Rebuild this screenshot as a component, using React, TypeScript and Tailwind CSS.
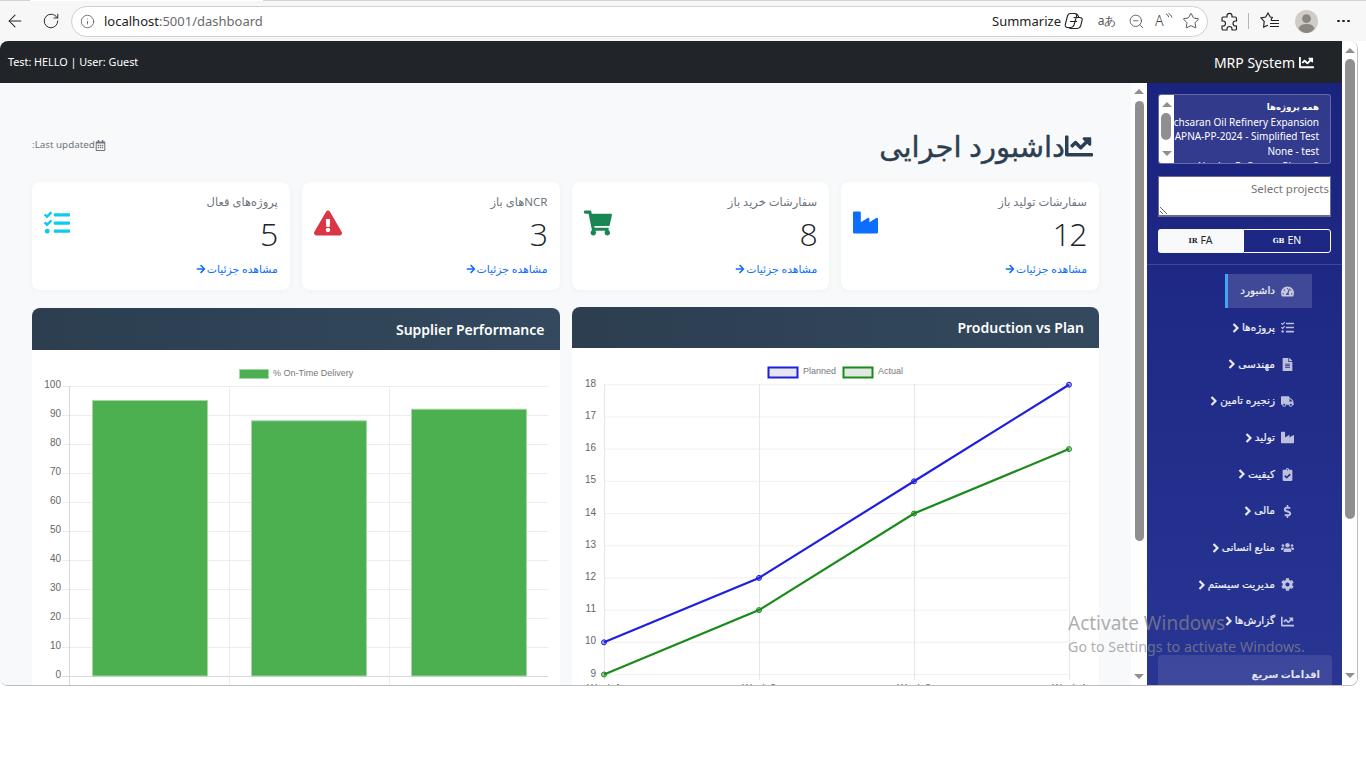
import React from 'react';
import { ArrowLeft, RotateCw, Info, ZoomOut, Star } from 'lucide-react';
import {
    FaChartLine, FaRegCalendarAlt, FaTasks, FaExclamationTriangle, FaShoppingCart, FaIndustry, FaArrowRight,
    FaTachometerAlt, FaFileAlt, FaTruck, FaClipboardCheck, FaDollarSign, FaUsers, FaCog,
} from 'react-icons/fa';

const uiFont = "font-['Noto_Sans','DejaVu_Sans',sans-serif]";

const stats = [
    { title: 'سفارشات تولید باز', value: '12', icon: <FaIndustry className="w-[25px] h-[25px] text-[#0d6efd]" /> },
    { title: 'سفارشات خرید باز', value: '8', icon: <FaShoppingCart className="w-[28px] h-[26px] text-[#198754]" /> },
    { title: 'NCRهای باز', value: '3', icon: <FaExclamationTriangle className="w-[28px] h-[26px] text-[#dc3545]" /> },
    { title: 'پروژه‌های فعال', value: '5', icon: <FaTasks className="w-[26px] h-[26px] text-[#0dcaf0]" /> },
];

const navItems = [
    { label: 'داشبورد', icon: <FaTachometerAlt />, active: true },
    { label: 'پروژه‌ها', icon: <FaTasks />, sub: true },
    { label: 'مهندسی', icon: <FaFileAlt />, sub: true },
    { label: 'زنجیره تامین', icon: <FaTruck />, sub: true },
    { label: 'تولید', icon: <FaIndustry />, sub: true },
    { label: 'کیفیت', icon: <FaClipboardCheck />, sub: true },
    { label: 'مالی', icon: <FaDollarSign />, sub: true },
    { label: 'منابع انسانی', icon: <FaUsers />, sub: true },
    { label: 'مدیریت سیستم', icon: <FaCog />, sub: true },
    { label: 'گزارش‌ها', icon: <FaChartLine />, sub: true },
];

const ScrollBar: React.FC<{ thumbTop: number; thumbHeight: number; className: string; thumbClass: string }> = ({ thumbTop, thumbHeight, className, thumbClass }) => (
    <div className={`relative flex flex-col items-center justify-between shrink-0 ${className}`}>
        <div className="w-0 h-0 border-x-[5px] border-x-transparent border-b-[5px] border-b-[#8f8f8f]" />
        <div className={`absolute rounded-full bg-[#8f8f8f] ${thumbClass}`} style={{ top: thumbTop, height: thumbHeight }} />
        <div className="w-0 h-0 border-x-[5px] border-x-transparent border-t-[5px] border-t-[#8f8f8f]" />
    </div>
);

const CopilotIcon = () => (
    <svg width="20" height="18" viewBox="0 0 20 18" fill="none" stroke="#222" strokeWidth="1.1">
        <path d="M6.500 1.500h4c1.800 0 2.500 1.200 2 2.800L10 13c-.5 1.600-1.600 2.500-3 2.500H3.500c-1.700 0-2.600-1.400-2.200-3L3.500 4c.4-1.500 1.500-2.500 3-2.500z" />
        <path d="M9.500 5.500h6.200c1.900 0 2.900 1.400 2.400 3l-1.500 5.500c-.5 1.500-1.600 2.500-3 2.500H7.500c-1.300 0-2.300-.4-3-1.200" />
        <path d="M11.500 1.800c1.700.2 2.700 1.500 3.400 3.700M6 9.500h7" />
    </svg>
);

const PuzzleIcon = () => (
    <svg width="19" height="19" viewBox="0 0 19 19" fill="none" stroke="#222" strokeWidth="1.150" className="shrink-0">
        <path d="M7 3.800a2.500 2.500 0 0 1 5 0V5h3.200c.7 0 1.300.6 1.300 1.300V9h-1a2.500 2.500 0 0 0 0 5h1v2.700c0 .7-.6 1.300-1.300 1.300H12v-1a2.500 2.500 0 0 0-5 0v1H3.300c-.7 0-1.300-.6-1.300-1.300V14h1a2.500 2.500 0 0 0 0-5H2V6.300C2 5.600 2.600 5 3.300 5H7z" />
    </svg>
);

const FavoritesIcon = () => (
    <svg width="21" height="18" viewBox="0 0 21 18" fill="none" stroke="#222" strokeWidth="1.150" className="shrink-0">
        <path d="M13 5.500 10.300 5 8 1 5.700 5 1 6l3.200 3.400L3.600 15 8 13.300" />
        <path d="M11 8.500h3M10 11.500h9M10 14.500h9M12 5.800l-1 2.700M14 8.500h5" />
    </svg>
);

const NavChevron = () => (
    <svg width="7" height="10" viewBox="0 0 7 10" fill="none" stroke="currentColor" strokeWidth="2.200" className="shrink-0 -mr-[2px]">
        <path d="M1.500 1 5.500 5 1.500 9" />
    </svg>
);

const BrowserBar = () => (
    <div className="h-[41px] shrink-0 bg-[#f7f7f7] flex flex-col text-[#222]">
        <div className="h-px flex shrink-0">
            <div className="w-[30px] bg-[#d4d4d4]" />
            <div className="w-[233px] bg-white" />
            <div className="flex-1 bg-[#d4d4d4]" />
        </div>
        <div className="flex-1 flex items-center">
            <div className="w-[71px] flex items-center shrink-0">
                <ArrowLeft className="w-[20px] h-[20px] ml-[5px]" strokeWidth={1.25} />
                <RotateCw className="w-[18px] h-[18px] ml-[17px]" strokeWidth={1.25} />
            </div>
            <div className="w-[1137px] h-[31px] shrink-0 bg-white rounded-full border border-[#d0d0d0] flex items-center pl-[8px]">
                <Info className="w-[15px] h-[15px] text-[#555]" strokeWidth={1.25} />
                <span className="ml-[9px] pt-px text-[13px] text-[#6a6a6a]"><span className="text-[#222]">localhost</span>:5001/dashboard</span>
                <span className="ml-auto pt-px text-[13px] text-[#222]">Summarize</span>
                <span className="ml-[3px]"><CopilotIcon /></span>
                <span className="w-[32px] ml-[7px] text-center text-[#555] text-[12px] leading-none">aあ</span>
                <ZoomOut className="w-[17px] h-[17px] ml-[5px] text-[#444]" strokeWidth={1.1} />
                <span className="relative w-[18px] ml-[10px] text-[14px] font-light text-[#444] leading-none">
                    A
                    <svg className="absolute left-[10px] top-[-1px]" width="8" height="8" viewBox="0 0 8 8" fill="none" stroke="#444" strokeWidth="0.9">
                        <path d="M1 1c1.500.6 2.300 1.500 2.600 3M3.500.5c1.800.8 3 2.200 3.300 4" />
                    </svg>
                </span>
                <Star className="w-[18px] h-[18px] ml-[9px] mr-[7px] text-[#333]" strokeWidth={1.1} />
            </div>
            <span className="ml-[12px]"><PuzzleIcon /></span>
            <div className="w-px h-[16px] bg-[#b5b5b5] ml-[9px]" />
            <span className="ml-[11px]"><FavoritesIcon /></span>
            <svg className="ml-[14px] shrink-0" width="23" height="23" viewBox="0 0 23 23">
                <circle cx="11.500" cy="11.500" r="11.500" fill="#cfccc8" />
                <circle cx="11.500" cy="8.700" r="4.400" fill="#8a8782" />
                <path d="M3.500 18.500c1-3.200 4-4.500 8-4.500s7 1.300 8 4.500c-2 2.800-4.700 4.500-8 4.500s-6-1.700-8-4.500z" fill="#8a8782" />
            </svg>
            <div className="ml-[19px] flex gap-[2.500px]">
                <div className="w-[2.500px] h-[2.500px] rounded-full bg-[#222]" />
                <div className="w-[2.500px] h-[2.500px] rounded-full bg-[#222]" />
                <div className="w-[2.500px] h-[2.500px] rounded-full bg-[#222]" />
            </div>
        </div>
    </div>
);

const StatCard: React.FC<{ title: string; value: string; icon: React.ReactNode }> = ({ title, value, icon }) => (
    <div className="h-[108px] bg-white rounded-lg shadow-[0_1px_6px_rgba(0,0,0,0.04)] px-[12px] pt-[11px]">
        <div className="flex justify-between h-[67px]">
            <div>
                <div className="text-[11.500px] leading-[18px] text-[#6c757d]">{title}</div>
                <div className="mt-[5px] mr-[1px] text-[32px] leading-[36px] font-light tracking-[-1.500px] font-['Open_Sans',sans-serif] text-[#212529]">{value}</div>
            </div>
            <div className="pt-[17px]">{icon}</div>
        </div>
        <div className="mt-[1px] flex items-center gap-[1px] text-[10.800px] leading-[16px] text-[#0d6efd]">
            <span>مشاهده جزئیات</span>
            <FaArrowRight className="w-[10px] h-[10px]" />
        </div>
    </div>
);

const ChartCard: React.FC<{ title: string; className: string; headerClass: string; children: React.ReactNode }> = ({ title, className, headerClass, children }) => (
    <div className={`flex-1 min-w-0 flex flex-col ${className}`}>
        <div className={`shrink-0 rounded-t-lg bg-gradient-to-r from-[#2c3e50] to-[#34495e] flex items-center justify-start px-[15px] text-[14px] font-semibold text-white ${headerClass}`}>
            {title}
        </div>
        <div className="flex-1 bg-white">{children}</div>
    </div>
);

const BarChart = () => {
    const yTicks = [0, 10, 20, 30, 40, 50, 60, 70, 80, 90, 100];
    const y = (v: number) => 676 - v * 2.9;
    const bars = [{ x: 92, v: 95 }, { x: 251, v: 88 }, { x: 411, v: 92 }];
    return (
        <svg width="528" height="336" viewBox="32 350 528 336" className="block [direction:ltr] font-['Liberation_Sans',sans-serif]">
            <rect x="239.500" y="369.500" width="29" height="9" fill="#4caf50" stroke="#a5d6a7" />
            <text x="273" y="375.500" fontSize="9" fill="#777">% On-Time Delivery</text>
            {yTicks.map(t => (
                <g key={t}>
                    <line x1="62" x2="548" y1={y(t) + 0.5} y2={y(t) + 0.5} stroke={t === 0 ? '#d9d9d9' : '#ececec'} />
                    <text x="61" y={y(t) + 2} fontSize="10" fill="#666" textAnchor="end">{t}</text>
                </g>
            ))}
            {[69, 229, 389].map((x, i) => (
                <line key={x} x1={x + 0.5} x2={x + 0.5} y1="386" y2="686" stroke={i === 0 ? '#d9d9d9' : '#ececec'} />
            ))}
            {bars.map(b => (
                <rect key={b.x} x={b.x + 0.5} y={y(b.v)} width="115" height={676 - y(b.v)} fill="#4caf50" stroke="#a5d6a7" />
            ))}
        </svg>
    );
};

const LineChart = () => {
    const xs = [604, 759, 914, 1069];
    const y = (v: number) => 674.500 - (v - 9) * 32.2;
    const series = [
        { color: '#1f1fe0', data: [10, 12, 15, 18] },
        { color: '#1a8a1a', data: [9, 11, 14, 16] },
    ];
    return (
        <svg width="527" height="338" viewBox="572 348 527 338" className="block [direction:ltr] font-['Liberation_Sans',sans-serif]">
            <rect x="768.500" y="367.500" width="29" height="10" fill="#e6e6f0" stroke="#1f1fe0" strokeWidth="2" />
            <text x="803" y="373.500" fontSize="9" fill="#777">Planned</text>
            <rect x="843.500" y="367.500" width="29" height="10" fill="#e2e8e2" stroke="#1a8a1a" strokeWidth="2" />
            <text x="878" y="373.500" fontSize="9" fill="#777">Actual</text>
            {[9, 10, 11, 12, 13, 14, 15, 16, 17, 18].map(t => (
                <g key={t}>
                    <line x1="604" x2="1069" y1={y(t)} y2={y(t)} stroke="#f0f0f0" />
                    <text x="596" y={y(t) + 2} fontSize="10" fill="#666" textAnchor="end">{t}</text>
                </g>
            ))}
            {xs.map((x, i) => (
                <g key={x}>
                    <line x1={x + 0.5} x2={x + 0.5} y1="384" y2="680" stroke="#e6e6e6" />
                    <text x={x} y="692" fontSize="10" fill="#666" textAnchor="middle">Week {i + 1}</text>
                </g>
            ))}
            {series.map(s => (
                <g key={s.color}>
                    <polyline fill="none" stroke={s.color} strokeWidth="2.200" points={s.data.map((v, i) => `${xs[i]},${y(v)}`).join(' ')} />
                    {s.data.map((v, i) => (
                        <circle key={i} cx={xs[i]} cy={y(v)} r="2.500" fill={s.color} fillOpacity="0.4" stroke={s.color} />
                    ))}
                </g>
            ))}
        </svg>
    );
};

const Sidebar = () => (
    <aside dir="rtl" className="w-[196px] shrink-0 overflow-hidden bg-gradient-to-b from-[#1a237e] to-[#283593] text-white">
        <div className="pr-[12px] pl-[11px] pt-[11px]">
            <div className="h-[70px] flex bg-white/10 border border-white/25 rounded-[3px] overflow-hidden">
                <div className="flex-1 min-w-0 overflow-hidden whitespace-nowrap px-[11px] pt-[5px] text-[10px] leading-[14.700px]">
                    <div className="font-bold text-[8.600px]">همه پروژه‌ها</div>
                    <div>Gachsaran Oil Refinery Expansion</div>
                    <div>APNA-PP-2024 - Simplified Test</div>
                    <div>None - test</div>
                    <div>Abadan Refinery - Phase 2</div>
                </div>
                <ScrollBar thumbTop={18} thumbHeight={27} className="w-[15px] bg-white py-[7px]" thumbClass="w-[10px] left-[2px]" />
            </div>
            <textarea
                readOnly
                placeholder="Select projects"
                className="block w-full h-[41px] mt-[12px] bg-white border border-b-2 border-[#6b6f8f] pr-[1px] pt-[4px] text-[11.500px] leading-[16px] placeholder:text-[#757575]"
            />
            <div dir="ltr" className="flex h-[24px] mt-[12px] text-[10.500px]">
                <div className="w-[85px] bg-[#f8f9fa] rounded-l-[3px] flex items-center justify-center gap-[3px] text-[#212529]">
                    <span className="text-[7px] font-bold font-['DejaVu_Serif',serif]">IR</span><span>FA</span>
                </div>
                <div className="flex-1 border border-white rounded-r-[3px] flex items-center justify-center gap-[3px]">
                    <span className="text-[7px] font-bold font-['DejaVu_Serif',serif]">GB</span><span>EN</span>
                </div>
            </div>
        </div>
        <div className="h-px bg-white/15 mt-[11px] mb-[9px]" />
        <nav>
            {navItems.map(item => (
                <div
                    key={item.label}
                    className={`h-[34px] mb-[2.700px] mr-[31px] pr-[18px] flex items-center gap-[5px] text-[10.500px] [-webkit-text-stroke:0.2px] text-white/90 ${item.active ? 'w-[87px] bg-white/15 border-l-[3px] border-[#42a5f5] text-white' : ''}`}
                >
                    <span className="w-[14px] flex justify-center text-[13px] text-white/70 shrink-0">{item.icon}</span>
                    <span className="whitespace-nowrap">{item.label}</span>
                    {item.sub && <NavChevron />}
                </div>
            ))}
        </nav>
        <div className="mx-[11px] mt-[17px] h-[60px] bg-white/10 rounded-[4px] px-[12px] pt-[12px] text-[10px] font-bold text-white/85">اقدامات سریع</div>
    </aside>
);

const App: React.FC = () => (
    <div className={`relative w-[1366px] h-[768px] overflow-hidden bg-white flex flex-col ${uiFont}`}>
        <BrowserBar />
        <div className="h-[645px] w-[1358px] flex overflow-hidden rounded-b-lg rounded-tr-lg rounded-tl-lg border-b border-r border-[#bdbdbd]">
            <div className="flex-1 min-w-0 flex flex-col">
                <header className="h-[42px] shrink-0 bg-[#212529] text-white flex items-center justify-between pl-[8px] pr-[28px]">
                    <span className="text-[10.800px]">Test: HELLO | User: Guest</span>
                    <span className="flex items-center gap-[4px] text-[14px]">MRP System <FaChartLine className="w-[15px] h-[15px]" /></span>
                </header>
                <div className="flex-1 min-h-0 flex">
                    <main className="w-[1131px] shrink-0 overflow-hidden bg-[#f8f9fa] px-[32px] pt-[41px]">
                        <div dir="rtl" className="flex items-center justify-between h-[44px]">
                            <h1 className="flex items-center text-[29px] [-webkit-text-stroke:0.4px] text-[#2c3e50] pr-[6px] whitespace-nowrap">
                                <FaChartLine className="w-[28px] h-[28px] shrink-0" />
                                <span>داشبورد اجرایی</span>
                            </h1>
                            <div className="flex items-center text-[9.800px] text-[#6c757d] mt-[-2px]">
                                <FaRegCalendarAlt className="w-[11px] h-[11px]" />
                                <span>Last updated:</span>
                            </div>
                        </div>
                        <div dir="rtl" className="grid grid-cols-4 gap-[12px] mt-[14px]">
                            {stats.map(s => <StatCard key={s.title} {...s} />)}
                        </div>
                        <div dir="rtl" className="flex gap-[12px] mt-[18px] h-[400px]">
                            <ChartCard title="Production vs Plan" className="-mt-px" headerClass="h-[41px]"><LineChart /></ChartCard>
                            <ChartCard title="Supplier Performance" className="" headerClass="h-[42px]"><BarChart /></ChartCard>
                        </div>
                    </main>
                    <ScrollBar thumbTop={18} thumbHeight={440} className="w-[16px] bg-white py-[6px]" thumbClass="w-[9px] left-[4px]" />
                    <Sidebar />
                </div>
            </div>
            <ScrollBar thumbTop={18} thumbHeight={460} className="w-[15px] bg-white py-[7px]" thumbClass="w-[10px] left-[3px]" />
        </div>
        <div className="absolute left-[1068px] top-[610px] pointer-events-none whitespace-nowrap text-[#8a8a8a]/70">
            <div className="text-[19px] leading-[27px]">Activate Windows</div>
            <div className="text-[14.300px] leading-[19px]">Go to Settings to activate Windows.</div>
        </div>
    </div>
);

export default App;
